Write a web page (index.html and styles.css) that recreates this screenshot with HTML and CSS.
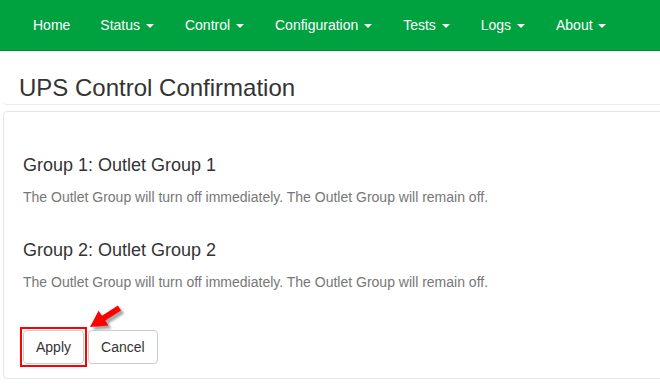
FILE: index.html
```html
<!DOCTYPE html>
<html lang="en">
<head>
    <meta charset="UTF-8">
    <meta name="viewport" content="width=device-width, initial-scale=1.0">
    <title>UPS Control Confirmation</title>
    <link rel="stylesheet" href="styles.css">
</head>
<body>

    <nav class="navbar">
        <ul class="nav">
            <li><a href="#">Home</a></li>
            <li class="dropdown"><a href="#">Status <span class="caret"></span></a></li>
            <li class="dropdown"><a href="#">Control <span class="caret"></span></a></li>
            <li class="dropdown"><a href="#">Configuration <span class="caret"></span></a></li>
            <li class="dropdown"><a href="#">Tests <span class="caret"></span></a></li>
            <li class="dropdown"><a href="#">Logs <span class="caret"></span></a></li>
            <li class="dropdown"><a href="#">About <span class="caret"></span></a></li>
        </ul>
    </nav>

    <div class="page-header">
        <h1>UPS Control Confirmation</h1>
    </div>

    <!-- confirmation panel -->
    <div class="panel">
        <div class="group">
            <h4>Group 1: Outlet Group 1</h4>
            <p>The Outlet Group will turn off immediately. The Outlet Group will remain off.</p>
        </div>
        <div class="group">
            <h4>Group 2: Outlet Group 2</h4>
            <p>The Outlet Group will turn off immediately. The Outlet Group will remain off.</p>
        </div>

        <div class="actions">
            <button type="button" class="btn btn-apply">Apply
                <svg class="arrow" width="50" height="40" viewBox="0 0 50 40">
                    <defs>
                        <filter id="blur" x="-20%" y="-20%" width="140%" height="140%">
                            <feGaussianBlur stdDeviation="1.2"/>
                        </filter>
                    </defs>
                    <polygon class="arrow-shadow" filter="url(#blur)" transform="translate(3 3)"
                        points="9,31 27.5,29.5 24.2,24.6 40,14.4 36.9,9.5 21,19.8 17.5,14.8"/>
                    <polygon class="arrow-body"
                        points="9,31 27.5,29.5 24.2,24.6 40,14.4 36.9,9.5 21,19.8 17.5,14.8"/>
                </svg>
            </button>
            <button type="button" class="btn">Cancel</button>
        </div>
    </div>

</body>
</html>
```

FILE: styles.css
```css
body {
    font-family: "Liberation Sans", Arial, sans-serif;
    font-size: 14px;
    line-height: 20px;
    color: #333;
    margin: 0;
    padding: 0;
    background-color: #fff;
    overflow: hidden;
}
.navbar {
    background-color: #00a13f;
    border-bottom: 1px solid #008c36;
    height: 50px;
}
.nav {
    list-style: none;
    margin: 0;
    padding: 0 0 0 18px;
    display: flex;
}
.nav a {
    display: block;
    padding: 15px;
    color: #fff;
    text-decoration: none;
}
.nav .dropdown a {
    padding-right: 16px;
}
.caret {
    display: inline-block;
    width: 0;
    height: 0;
    margin-left: 2px;
    vertical-align: middle;
    border-top: 4px solid #fff;
    border-right: 4px solid transparent;
    border-left: 4px solid transparent;
}
.page-header {
    margin: 0 -10px 0 3px;
    padding: 24px 0 3px 16px;
    border-bottom: 1px solid #ebebeb;
    border-radius: 0 0 4px 4px;
}
.page-header h1 {
    margin: 0;
    font-size: 24px;
    font-weight: normal;
    line-height: 1.1;
}
.panel {
    margin: 6px -10px 0 3px;
    padding: 44px 19px 14px 19px;
    border: 1px solid #e6e6e6;
    border-radius: 4px;
    box-shadow: 0 1px 1px rgba(0,0,0,0.04);
}
.group h4 {
    margin: 0;
    font-size: 18px;
    font-weight: normal;
    line-height: 1.1;
}
.group p {
    margin: 11px 0 0 0;
    color: #777;
}
.group + .group {
    margin-top: 34px;
}
.actions {
    margin-top: 38px;
    display: flex;
    gap: 4px;
}
.btn {
    position: relative;
    height: 34px;
    font-family: inherit;
    font-size: 14px;
    line-height: 20px;
    color: #333;
    background-color: #fff;
    padding: 6px 12px;
    border: 1px solid #ccc;
    border-radius: 4px;
    cursor: pointer;
}
/* red highlight around Apply */
.btn-apply::after {
    content: "";
    position: absolute;
    top: -4px;
    right: -4px;
    bottom: -4px;
    left: -4px;
    border: 2px solid #f00;
}
.arrow {
    position: absolute;
    left: 57px;
    top: -35px;
    overflow: visible;
}
.arrow-shadow {
    fill: rgba(0,0,0,0.35);
}
.arrow-body {
    fill: #f00;
}
```
